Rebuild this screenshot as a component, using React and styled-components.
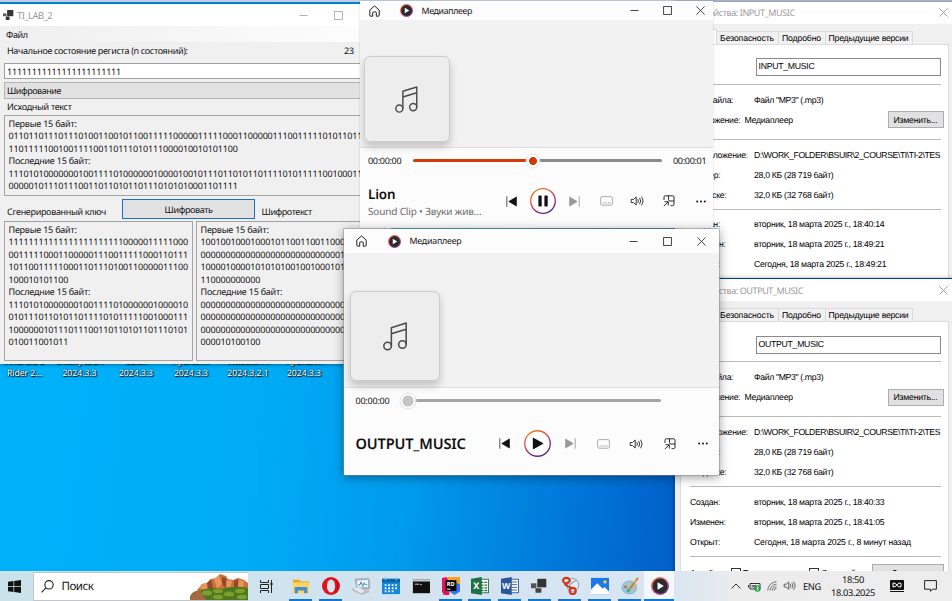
import React from 'react';
import styled, { createGlobalStyle, css } from 'styled-components';

const Global = createGlobalStyle`
  *, *::before, *::after { box-sizing: border-box; }
  html, body { margin: 0; padding: 0; overflow: hidden; }
  body { text-rendering: geometricPrecision; }
`;

const segoe = '"Noto Sans", "Open Sans", sans-serif';
const msSans = '"Liberation Sans", Arial, sans-serif';

const Desktop = styled.main`
  position: relative;
  width: 952px;
  height: 601px;
  overflow: hidden;
  font-family: ${segoe};
  color: #111;
  background:
    linear-gradient(180deg, #c3cde2 0 2px, transparent 2px),
    linear-gradient(97deg, #00b2fb 0%, #00acf6 30%, #009aec 46%, #007bdb 60%, #0062ca 71%, #005cc4 100%);
`;

const SkyStrip = styled.div`
  position: absolute;
  inset: 2px 0 auto 0;
  height: 3px;
  background: #0088d8;
`;

const T = styled.span`
  display: block;
  white-space: pre;
  font-size: ${p => p.$size || 9}px;
  letter-spacing: ${p => p.$ls || 0}px;
  color: ${p => p.$color || 'inherit'};
  font-weight: ${p => p.$weight || 400};
  ${p => p.$ml && css`margin-left: ${p.$ml}px;`}
`;

const Window = styled.section`
  position: absolute;
  left: ${p => p.$x}px;
  top: ${p => p.$y}px;
  width: ${p => p.$w}px;
  height: ${p => p.$h}px;
  display: flex;
  flex-direction: column;
  overflow: hidden;
  background: ${p => p.$bg || '#f0f0f0'};
  box-shadow: ${p => p.$shadow || '0 1px 3px rgba(0,0,0,.35)'};
`;

/* ---------- Window caption ---------- */
const Caption = styled.header`
  flex: none;
  display: flex;
  align-items: center;
  height: ${p => p.$h}px;
  padding-left: ${p => p.$pl || 0}px;
  background: ${p => p.$bg || '#fff'};
`;
const CaptionButtons = styled.div`
  display: flex;
  flex: none;
  margin-left: auto;
  margin-right: ${p => p.$mr || 0}px;
`;
const CaptionButton = styled.div`
  width: ${p => p.$w}px;
  display: grid;
  place-items: center;
`;
const Svg = styled.svg`
  display: block;
  flex: none;
  overflow: visible;
`;

function WinGlyph({ kind, color = '#222', s = 9 }) {
  return (
    <Svg width={s} height={s} viewBox="0 0 9 9" fill="none" stroke={color} strokeWidth="0.9">
      {kind === 'min' && <path d="M0.5 4.5H8.5" />}
      {kind === 'max' && <rect x="0.6" y="0.6" width="7.8" height="7.8" />}
      {kind === 'close' && <path d="M0.4 0.4L8.6 8.6M8.6 0.4L0.4 8.6" />}
    </Svg>
  );
}

function Buttons({ w, mr, color, kinds = ['min', 'max', 'close'] }) {
  return (
    <CaptionButtons $mr={mr}>
      {kinds.map(k => (
        <CaptionButton key={k} $w={w}><WinGlyph kind={k} color={color} /></CaptionButton>
      ))}
    </CaptionButtons>
  );
}

/* ---------- Cipher application ---------- */
const MenuBar = styled.nav`
  height: 16px;
  flex: none;
  display: flex;
  align-items: center;
  padding-left: 6px;
  background: linear-gradient(90deg, #f0f0f0 34px, #fdfdfd 370px);
`;
const FormRow = styled.div`
  flex: none;
  display: flex;
  align-items: center;
  height: ${p => p.$h}px;
  padding: 0 37px ${p => p.$pb || 0}px 7px;
  justify-content: space-between;
`;
const TextInput = styled.div`
  flex: none;
  height: 16px;
  margin: 3px 6px 3px 4px;
  padding-left: 2px;
  display: flex;
  align-items: center;
  background: #fff;
  border: 1px solid #a0a0a0;
`;
const ComboBox = styled.div`
  flex: none;
  height: 17px;
  margin: 0 6px 0 4px;
  padding-left: 2px;
  display: flex;
  align-items: center;
  background: #e1e1e1;
  border: 1px solid #b4b4b4;
`;
const Output = styled.div`
  flex: none;
  height: ${p => p.$h}px;
  width: ${p => p.$w}px;
  padding: 1.8px 0 0 3.5px;
  overflow: hidden;
  border: 1px solid #a3a3a3;
`;
const OutputLine = styled.div`
  height: 12.5px;
  line-height: 12.5px;
  white-space: pre;
  font-size: 9px;
  letter-spacing: ${p => (p.$digits ? '-0.165px' : '-0.22px')};
`;
const ActionRow = styled.div`
  flex: none;
  display: grid;
  grid-template-columns: 115px 133px 1fr;
  height: 25px;
  padding: 3px 0 2px 7px;
`;
const ActionLabel = styled.div`
  padding-top: ${p => p.$pt}px;
  padding-left: ${p => p.$pl || 0}px;
`;
const PrimaryButton = styled.div`
  display: grid;
  place-items: center;
  background: #e1e1e1;
  border: 1.5px solid #1c6fcb;
`;
const Boxes = styled.div`
  display: flex;
  gap: 3px;
  padding-left: 4px;
`;

const sourceLines = [
  'Первые 15 байт:',
  '01101101110111010011001011001111100000111110001100000111001111101011011101',
  '1101111100100111100110111010111000010010101100',
  'Последние 15 байт:',
  '11101010000000100111101000000100001001011101101011011110101111100100011100',
  '0000010111011100110110101101110101010001101111',
];
const keyLines = [
  'Первые 15 байт:',
  '111111111111111111111110000011111000',
  '001111100011000001110011111000110111',
  '101100111110001101110100110000011100',
  '100010101100',
  'Последние 15 байт:',
  '111010100000001001111010000001000010',
  '010111011010110111101011111001000111',
  '100000010111011100110110101101110101',
  '010011001011',
];
const cipherLines = [
  'Первые 15 байт:',
  '100100100010001011001100110001011010',
  '000000000000000000000000000010000000',
  '100001000010101010010010001011010110',
  '110000000000',
  'Последние 15 байт:',
  '000000000000000000000000000000000000',
  '000000000000000000000000000000000000',
  '000000000000000000000000000000000000',
  '000010100100',
];

function Lines({ items }) {
  return items.map((t, i) => <OutputLine key={i} $digits={/^[01]+$/.test(t)}>{t}</OutputLine>);
}

function FormsIcon({ s = 11 }) {
  return (
    <Svg width={s} height={s} viewBox="0 0 16 16">
      <rect x="6" y="0" width="9" height="9" fill="#333" />
      <rect x="0" y="5" width="5" height="4" fill="#555" />
      <rect x="4" y="9.5" width="5.5" height="5" fill="#333" />
    </Svg>
  );
}

function CipherWindow() {
  return (
    <Window $x={0} $y={4} $w={391} $h={359.5}>
      <Caption $h={22} $pl={3}>
        <FormsIcon />
        <T $size={9.6} $ls={-0.6} $color="#999" $ml={3}>TI_LAB_2</T>
        <Buttons w={35} color="#aaa" />
      </Caption>
      <MenuBar><T $ls={-0.4}>Файл</T></MenuBar>
      <FormRow $h={18} $pb={1}>
        <T $ls={-0.33}>Начальное состояние региста (n состояний):</T>
        <T $ls={-0.1}>23</T>
      </FormRow>
      <TextInput><T $ls={-0.19}>11111111111111111111111</T></TextInput>
      <ComboBox><T $ls={-0.45}>Шифрование</T></ComboBox>
      <FormRow $h={16} $pb={1}><T $ls={-0.31}>Исходный текст</T></FormRow>
      <Boxes><Output $w={381} $h={81}><Lines items={sourceLines} /></Output></Boxes>
      <ActionRow>
        <ActionLabel $pt={5.5}><T $ls={-0.31}>Сгенерированный ключ</T></ActionLabel>
        <PrimaryButton><T $ls={-0.38}>Шифровать</T></PrimaryButton>
        <ActionLabel $pt={5.5} $pl={6.5}><T $ls={-0.42}>Шифротекст</T></ActionLabel>
      </ActionRow>
      <Boxes>
        <Output $w={189} $h={140}><Lines items={keyLines} /></Output>
        <Output $w={189} $h={140}><Lines items={cipherLines} /></Output>
      </Boxes>
    </Window>
  );
}

/* ---------- File properties ---------- */
const TabStrip = styled.div`
  flex: none;
  height: 20px;
  display: flex;
  align-items: flex-end;
  padding-left: 7px;
  background: #f0f0f0;
`;
const Tab = styled.div`
  width: ${p => p.$w}px;
  height: ${p => (p.$active ? 15 : 13)}px;
  display: grid;
  place-items: center;
  background: ${p => (p.$active ? '#fff' : '#f1f1f1')};
  border: 1px solid #dadada;
  border-bottom: 0;
  border-left-width: ${p => (p.$active ? 1 : 0)}px;
`;
const Page = styled.div`
  flex: 1;
  margin: 0 0 0 5px;
  width: 269px;
  padding: 0 7px 0 9px;
  background: #fff;
  border: 1px solid #dcdcdc;
`;
const Group = styled.div`
  width: 251px;
  height: ${p => p.$h}px;
  padding-top: ${p => p.$pt}px;
  border-bottom: 1px solid #b9b9b9;
`;
const PropRow = styled.div`
  display: flex;
  align-items: center;
  height: 20px;
  padding-left: 0.5px;
`;
const PropLabel = styled.div`
  flex: none;
  width: ${p => p.$w || 64}px;
`;
const PropValue = styled.div`
  width: 190px;
  overflow: hidden;
`;
const NameField = styled.div`
  height: 18px;
  margin-left: 66px;
  width: 185px;
  padding: 2px 0 0 2px;
  border: 1px solid #8a8a8a;
`;
const GreyButton = styled.div`
  flex: none;
  width: ${p => p.$w}px;
  height: 17px;
  margin-left: auto;
  margin-right: ${p => p.$mr || 0}px;
  display: grid;
  place-items: center;
  background: #e1e1e1;
  border: 1px solid #adadad;
`;
const Check = styled.span`
  flex: none;
  width: 10px;
  height: 10px;
  margin-left: ${p => p.$ml || 0}px;
  margin-right: 2px;
  border: 1px solid #333;
  background: #fff;
`;
const Sans = styled(T)`
  font-family: ${msSans};
  font-size: 8.7px;
  letter-spacing: ${p => p.$ls ?? -0.27}px;
  color: #000;
`;

function Prop({ label, value, ls }) {
  return (
    <PropRow>
      <PropLabel><Sans>{label}</Sans></PropLabel>
      <PropValue><Sans $ls={ls}>{value}</Sans></PropValue>
    </PropRow>
  );
}

function PropertiesWindow({ y, h, name, created, changed, opened, openedLs }) {
  return (
    <Window $x={674.5} $y={y} $w={290} $h={h} $shadow="0 0 5px rgba(0,0,0,.45)">
      <Caption $h={22} $pl={24}>
        <T $size={9} $ls={-0.4} $color="#9a9a9a">Свойства: {name}</T>
        <Buttons w={30} mr={6} color="#999" kinds={['close']} />
      </Caption>
      <TabStrip>
        <Tab $w={35} $active><Sans>Общие</Sans></Tab>
        <Tab $w={62}><Sans $ls={-0.13}>Безопасность</Sans></Tab>
        <Tab $w={47}><Sans $ls={-0.15}>Подробно</Sans></Tab>
        <Tab $w={87}><Sans $ls={-0.24}>Предыдущие версии</Sans></Tab>
      </TabStrip>
      <Page>
        <Group $h={40} $pt={13.5}><NameField><Sans>{name}</Sans></NameField></Group>
        <Group $h={55} $pt={5}>
          <Prop label="Тип файла:" value={'Файл "MP3" (.mp3)'} ls={-0.36} />
          <PropRow>
            <PropLabel $w={54.5}><Sans>Приложение:</Sans></PropLabel>
            <Sans>Медиаплеер</Sans>
            <GreyButton $w={56} $mr={-3}><Sans $ls={-0.22}>Изменить...</Sans></GreyButton>
          </PropRow>
        </Group>
        <Group $h={70} $pt={5}>
          <Prop label="Расположение:" value="D:\WORK_FOLDER\BSUIR\2_COURSE\TI\TI-2\TES" ls={-0.43} />
          <Prop label="Размер:" value="28,0 КБ (28 719 байт)" ls={-0.3} />
          <Prop label="На диске:" value="32,0 КБ (32 768 байт)" ls={-0.3} />
        </Group>
        <Group $h={70} $pt={4.5}>
          <Prop label="Создан:" value={created} />
          <Prop label="Изменен:" value={changed} />
          <Prop label="Открыт:" value={opened} ls={openedLs} />
        </Group>
        <Group $h={40} $pt={5.5}>
          <PropRow>
            <PropLabel $w={41}><Sans>Атрибуты:</Sans></PropLabel>
            <Check /><Sans>Только чтение</Sans>
            <Check $ml={12} /><Sans>Скрытый</Sans>
            <GreyButton $w={72} $mr={-3}><Sans>Другие...</Sans></GreyButton>
          </PropRow>
        </Group>
      </Page>
    </Window>
  );
}

/* ---------- Media player ---------- */
const PlayerBody = styled.div`
  flex: none;
  height: ${p => p.$h}px;
  padding: ${p => p.$pad};
  background: #f2f2f2;
  border-bottom: 1px solid #dedede;
`;
const AlbumArt = styled.div`
  display: grid;
  place-items: center;
  width: ${p => p.$w}px;
  height: ${p => p.$h}px;
  border-radius: 6px;
  background: #ededed;
  border: 1px solid #cdcdcd;
  box-shadow: 0 5px 9px rgba(0,0,0,.2);
`;
const SeekRow = styled.div`
  flex: none;
  height: 25px;
  display: flex;
  align-items: center;
  padding-left: ${p => p.$pl}px;
`;
const SeekTime = styled.div`
  flex: none;
  width: ${p => p.$w}px;
`;
const Track = styled.div`
  position: relative;
  flex: none;
  width: ${p => p.$w}px;
  height: 3px;
  border-radius: 2px;
  background: ${p => `linear-gradient(90deg, #d43a09 ${p.$fill}%, ${p.$rest} ${p.$fill}%)`};
`;
const Thumb = styled.div`
  position: absolute;
  left: ${p => p.$at}%;
  top: 50%;
  width: ${p => p.$d}px;
  height: ${p => p.$d}px;
  transform: translate(-50%, -50%);
  border-radius: 50%;
  border: 1px solid #e2e2e2;
  background: radial-gradient(circle, ${p => p.$color} ${p => p.$r}px, #fff ${p => p.$r + 0.7}px);
`;
const ControlRow = styled.div`
  flex: none;
  height: ${p => p.$h}px;
  display: flex;
  align-items: center;
`;
const TrackInfo = styled.div`
  flex: none;
  width: ${p => p.$w}px;
  padding-left: ${p => p.$pl}px;
  white-space: nowrap;
`;
const SubTitle = styled(T)`
  margin-top: 1px;
`;
const Control = styled.div`
  flex: none;
  width: ${p => p.$w}px;
  display: grid;
  place-items: center;
`;
const TitleIcon = styled.div`
  flex: none;
  margin-left: ${p => p.$ml}px;
`;

function HomeIcon() {
  return (
    <Svg width="11" height="12" viewBox="0 0 11 12" fill="none" stroke="#222" strokeWidth="1">
      <path d="M.8 5.1 5.5.9l4.700 4.200v5.300q0 .8-.8.8H7.300V7.700q0-.8-.8-.8h-2q-.8 0-.8.8v3.500H1.600q-.8 0-.8-.8z" strokeLinejoin="round" />
    </Svg>
  );
}
function PlayerLogo({ s = 13, id }) {
  return (
    <Svg width={s} height={s} viewBox="0 0 26 26">
      <defs>
        <linearGradient id={id} x1="0" y1="0" x2="1" y2="1">
          <stop offset="0" stopColor="#f58220" /><stop offset=".55" stopColor="#d1508a" /><stop offset="1" stopColor="#4b2a8e" />
        </linearGradient>
      </defs>
      <circle cx="13" cy="13" r="13" fill={`url(#${id})`} />
      <circle cx="13" cy="13" r="10.800" fill="#2b2a2e" />
      <path d="M9.500 7.500v11l9-5.500z" fill="#fff" />
    </Svg>
  );
}
function NoteIcon({ s }) {
  return (
    <Svg width={s} height={s * 1.17} viewBox="0 0 24 28" fill="none" stroke="#4b4b4b" strokeWidth="1.500">
      <circle cx="4.500" cy="23.500" r="3.700" /><circle cx="19" cy="22" r="3.700" />
      <path d="M8.200 23.500V5.500L22.700 1v21M8.200 11.500 22.700 7" strokeLinejoin="round" />
    </Svg>
  );
}
function Ring({ d, playing, id }) {
  return (
    <Svg width={d} height={d} viewBox="0 0 26 26">
      <defs>
        <linearGradient id={id} x1=".2" y1="0" x2=".8" y2="1">
          <stop offset="0" stopColor="#f0801f" /><stop offset=".35" stopColor="#e0503c" /><stop offset=".6" stopColor="#a5288a" /><stop offset="1" stopColor="#4a2382" />
        </linearGradient>
      </defs>
      <circle cx="13" cy="13" r="12.300" fill="#fff" stroke={`url(#${id})`} strokeWidth="1.300" />
      {playing
        ? <path d="M9.100 7.500h1.900q.7 0 .7.700v9.600q0 .7-.7.700H9.100q-.7 0-.7-.7V8.200q0-.7.700-.7zM15.100 7.500h1.900q.7 0 .7.700v9.600q0 .7-.7.700h-1.900q-.7 0-.7-.7V8.200q0-.7.700-.7z" fill="#111" />
        : <path d="M8.500 8.200q0-1 1-.5l8.600 4.700q1 .6 0 1.200l-8.600 4.700q-1 .5-1-.5z" fill="#111" />}
    </Svg>
  );
}
function PrevIcon() {
  return (
    <Svg width="11" height="11" viewBox="0 0 11 11">
      <path d="M.3.300h1v10.400h-1z" fill="#555" />
      <path d="M10.800 1v9q0 .6-.6.200L3 6q-.7-.5 0-1L10.200.700q.6-.3.600.3z" fill="#111" />
    </Svg>
  );
}
function NextIcon() {
  return (
    <Svg width="11" height="11" viewBox="0 0 11 11">
      <path d="M9.700.300h1v10.400h-1z" fill="#a5a5a5" />
      <path d="M.2 1v9q0 .6.600.2L8 6q.7-.5 0-1L.8.700Q.2.400.2 1z" fill="#999" />
    </Svg>
  );
}
function CaptionIcon() {
  return (
    <Svg width="13" height="10" viewBox="0 0 13 10" fill="none" stroke="#a4a4a4">
      <rect x=".6" y=".6" width="11.800" height="8.600" rx="1.500" strokeWidth=".9" />
      <path d="M2.500 7h2M5.300 7h1.500M7.800 7h2.700" strokeWidth=".9" />
    </Svg>
  );
}
function SoundIcon({ color = '#222', s = 13 }) {
  return (
    <Svg width={s} height={s * 0.77} viewBox="0 0 13 10" fill="none" stroke={color} strokeWidth=".9" strokeLinecap="round">
      <path d="M.6 3.500h1.800L5.200 1v8L2.400 6.500H.6z" strokeLinejoin="round" />
      <path d="M7 3.500q1 1.500 0 3M8.800 2.200q2 2.800 0 5.600M10.600 1q3 4 0 8" />
    </Svg>
  );
}
function CastIcon() {
  return (
    <Svg width="12" height="12" viewBox="0 0 12 12" fill="none" stroke="#222" strokeWidth=".95">
      <path d="M1 5V2.200Q1 .8 2.400.800h7.200Q11 .8 11 2.200v7Q11 10.600 9.600 10.600H7.500" />
      <path d="M5.500.8v3.700q0 1.500 1.500 1.500H11" />
      <path d="M.8 11.200 5 7M1.500 6.700h3.800v3.800" />
    </Svg>
  );
}
function DotsIcon() {
  return (
    <Svg width="10" height="3" viewBox="0 0 10 3" fill="#111">
      <circle cx="1.200" cy="1.500" r="1" /><circle cx="5" cy="1.500" r="1" /><circle cx="8.800" cy="1.500" r="1" />
    </Svg>
  );
}

function PlayerWindow({ c }) {
  return (
    <Window $x={c.x} $y={c.y} $w={c.w} $h={c.h} $bg="#fcfcfc" $shadow={c.shadow}>
      <Caption $h={c.capH} $pl={c.capPad} $bg="#fcfcfc">
        <HomeIcon />
        <TitleIcon $ml={c.logoGap}><PlayerLogo id={`logo-${c.id}`} /></TitleIcon>
        <T $size={8.8} $ls={c.capLs} $ml={8.500}>Медиаплеер</T>
        <Buttons w={c.btnW} mr={c.btnMr} color="#333" />
      </Caption>
      <PlayerBody $h={c.bodyH} $pad={c.bodyPad}>
        <AlbumArt $w={c.artW} $h={c.artH}><NoteIcon s={c.note} /></AlbumArt>
      </PlayerBody>
      <SeekRow $pl={c.seekPad}>
        <SeekTime $w={c.seekTimeW}><T $size={9} $ls={c.timeLs}>00:00:00</T></SeekTime>
        <Track $w={c.trackW} $fill={c.fill} $rest={c.rest}>
          <Thumb $at={c.fill} $d={c.thumbD} $r={c.thumbR} $color={c.thumbColor} />
        </Track>
        {c.end && <T $size={9} $ls={c.timeLs} $ml={11}>{c.end}</T>}
      </SeekRow>
      <ControlRow $h={c.ctrlH}>
        <TrackInfo $w={c.infoW} $pl={c.seekPad}>
          <T $size={c.titleSize} $ls={c.titleLs} $weight={600}>{c.title}</T>
          {c.sub && <SubTitle $size={10} $ls={-0.16} $color="#6a6a6a">{c.sub}</SubTitle>}
        </TrackInfo>
        <Control $w={c.cell}><PrevIcon /></Control>
        <Control $w={c.cell}><Ring d={c.ring} playing={c.playing} id={`ring-${c.id}`} /></Control>
        <Control $w={c.cell}><NextIcon /></Control>
        <Control $w={c.cell}><CaptionIcon /></Control>
        <Control $w={c.cell}><SoundIcon /></Control>
        <Control $w={c.cell}><CastIcon /></Control>
        <Control $w={c.cell}><DotsIcon /></Control>
      </ControlRow>
    </Window>
  );
}

const lion = {
  id: 'lion', x: 360, y: 1, w: 353, h: 227, shadow: '0 0 2px rgba(0,0,0,.18)',
  capH: 19, capPad: 9, logoGap: 20, capLs: -0.35, btnW: 33, btnMr: -3.5,
  bodyH: 128, bodyPad: '36px 0 0 3.5px', artW: 86, artH: 86, note: 23,
  seekPad: 8, seekTimeW: 45, timeLs: -0.3, trackW: 249, fill: 48.200, rest: '#8b8b8b',
  thumbD: 15, thumbR: 3.600, thumbColor: '#d43a09', end: '00:00:01',
  ctrlH: 56, infoW: 135.700, titleSize: 13.4, titleLs: -0.15, title: 'Lion', sub: 'Sound Clip • Звуки жив…',
  cell: 31.600, ring: 26, playing: true,
};
const output = {
  id: 'output', x: 344, y: 229, w: 375, h: 246, shadow: '0 0 0 .5px #8a8a8a, 0 2px 10px rgba(0,0,0,.42)',
  capH: 24, capPad: 12, logoGap: 21, capLs: -0.2, btnW: 34, btnMr: 1,
  bodyH: 135, bodyPad: '38px 0 0 6px', artW: 90, artH: 90, note: 24.500,
  seekPad: 11.5, seekTimeW: 52.5, timeLs: -0.22, trackW: 253, fill: 0, rest: '#a5a5a5',
  thumbD: 17, thumbR: 5.200, thumbColor: '#c5c5c5',
  ctrlH: 61, infoW: 144, titleSize: 14.6, titleLs: -0.18, title: 'OUTPUT_MUSIC',
  cell: 33, ring: 27, playing: false,
};

/* ---------- Desktop labels ---------- */
const Labels = styled.div`
  position: absolute;
  left: 0;
  top: 356px;
  display: flex;
`;
const DesktopLabel = styled.div`
  width: ${p => p.$w}px;
  text-align: center;
  white-space: nowrap;
  color: #fff;
  font-size: 8.7px;
  line-height: 11.5px;
  letter-spacing: -0.05px;
  text-shadow: 0 0 2px #000, 1px 1px 1px #000;
`;

/* ---------- Taskbar ---------- */
const Taskbar = styled.footer`
  position: absolute;
  left: 0;
  top: 571px;
  width: 952px;
  height: 30px;
  display: flex;
  align-items: stretch;
  background: linear-gradient(90deg, #cbe2ea 0, #cfe4ee 300px, #d5e3f0 500px, #d9e5f2 640px, #dbe6f1 680px, #ececec 740px, #ededed 100%);
`;
const StartButton = styled.div`
  width: 32.5px;
  flex: none;
  display: flex;
  align-items: center;
  padding-left: 8px;
`;
const SearchBox = styled.div`
  flex: none;
  width: 215.5px;
  margin-top: 1px;
  display: flex;
  align-items: center;
  padding-left: 7.5px;
  background: #fff;
  border: 1px solid #c0c6ca;
  border-right-width: 0;
  overflow: hidden;
`;
const SearchArt = styled.div`
  margin-left: auto;
  align-self: flex-end;
`;
const TaskView = styled.div`
  flex: none;
  width: 38px;
  padding-right: 2px;
  display: grid;
  place-items: center;
`;
const TaskItem = styled.div`
  flex: none;
  width: 29.85px;
  display: flex;
  flex-direction: column;
  align-items: center;
  background: ${p => (p.$active ? 'rgba(255,255,255,.7)' : 'transparent')};
`;
const TaskIcon = styled.div`
  height: 28px;
  display: grid;
  place-items: center;
  padding: 2px 0 0 1px;
`;
const Underline = styled.div`
  height: 2px;
  width: ${p => (p.$active ? '100%' : '23px')};
  background: #0f78d6;
`;
const Tray = styled.div`
  margin-left: auto;
  display: grid;
  grid-template-columns: 18px 19px 17.5px 18px 26px 56px 32px 35px 4px;
  align-items: center;
  justify-items: center;
`;
const Clock = styled.div`
  display: flex;
  flex-direction: column;
  align-items: center;
  line-height: 13.500px;
`;

const appIcons = [
  { id: 'explorer', open: true, art: <>
    <path d="M1 3h7l2 2h9v4H1z" fill="#e8a820" /><path d="M1 6h18v12H1z" fill="#ffd45c" />
    <path d="M3 11h14v7h-3.500v-3h-7v3H3z" fill="#3f8fd6" /></> },
  { id: 'opera', open: true, art: <>
    <ellipse cx="10" cy="10" rx="10" ry="10" fill="#e2121f" /><ellipse cx="10" cy="10" rx="4.500" ry="7.300" fill="#d6e6ef" />
    <path d="M14 2.200a10 10 0 0 1 0 15.600q3-3 3-7.800t-3-7.800z" fill="#a70012" /></> },
  { id: 'monitor', art: <>
    <path d="M3 2l15-1 2 2v10l-3 1-12-1z" fill="#a3adb7" /><path d="M5.500 4 18 3v8.500l-12-.5z" fill="#e9f5fc" />
    <path d="M7 8.500h2l1-3 2 5 1.500-4 1 2h2.500" fill="none" stroke="#3583c0" /><path d="M0 13l8-3 8 5 3-1v3l-8 3-11-5z" fill="#b9bfc4" />
    <path d="M1 13l7-2 6 5-4 2z" fill="#e4e7ea" /></> },
  { id: 'calendar', art: <>
    <rect x="0" y="2" width="20" height="17" fill="#1588d9" /><rect x="0" y="2" width="20" height="4" fill="#0c66ad" />
    <path d="M3 9h14M3 12.500h14M3 16h10" stroke="#fff" strokeWidth="2" strokeDasharray="2 1.900" /><path d="M4 .5v3M16 .5v3" stroke="#6dc1f5" strokeWidth="1.500" /></> },
  { id: 'console', art: <>
    <rect x="1" y="2.500" width="19" height="15.500" fill="#111" /><rect x="1" y="2.500" width="19" height="2.500" fill="#c9c9c9" />
    <path d="M3 8h5M9 8.500h2" stroke="#ddd" /></> },
  { id: 'rider', open: true, art: <>
    <path d="M6 0h14v12l-8 3z" fill="#f7a21b" /><path d="M14 6l6 2v8l-6 4-6-4z" fill="#3574f0" /><path d="M0 1l5-1 4 6-1 14H2l-2-4z" fill="#e5125d" />
    <rect x="4" y="3.500" width="12" height="12" fill="#000" />
    <path d="M5.500 13.500h4" stroke="#fff" strokeWidth="1.100" /><text x="5.300" y="9.800" fontSize="6.300" fontWeight="700" fill="#fff">RD</text></> },
  { id: 'excel', open: true, art: <>
    <rect x="9" y="2.500" width="10.500" height="15" fill="#fff" stroke="#1e7145" /><path d="M11 6h7M11 9h7M11 12h7M11 15h7" stroke="#1e7145" strokeWidth="1.500" strokeDasharray="3 1" />
    <path d="M0 2 12 0v20L0 18z" fill="#1e7145" /><text x="2.400" y="13.800" fontSize="10" fontWeight="700" fill="#fff">X</text></> },
  { id: 'word', open: true, art: <>
    <rect x="9" y="2.500" width="10.500" height="15" fill="#fff" stroke="#2b579a" /><path d="M12 5.500h6M12 8.500h6M12 11.500h6M12 14.500h6" stroke="#2b579a" />
    <path d="M0 2 12 0v20L0 18z" fill="#2b579a" /><text x="1" y="13.600" fontSize="9.500" fontWeight="700" fill="#fff">W</text></> },
  { id: 'forms', open: true, art: <>
    <rect x="7" y="2" width="10" height="9.500" fill="#333" /><rect x="0" y="7" width="6" height="5.500" fill="#555" /><rect x="5" y="12.500" width="6.500" height="5" fill="#444" /></> },
  { id: 'snip', open: true, art: <>
    <ellipse cx="13" cy="9" rx="6.500" ry="7.500" fill="#e4edf5" stroke="#7f97b5" />
    <path d="M4 8 13 13" stroke="#c8321a" strokeWidth="2.400" />
    <path d="M8 10 17 3" stroke="#9aa" strokeWidth="1.600" />
    <ellipse cx="6" cy="4" rx="3.800" ry="3" fill="none" stroke="#d23a1e" strokeWidth="2.400" />
    <ellipse cx="13" cy="15.500" rx="3.300" ry="3.400" fill="none" stroke="#d23a1e" strokeWidth="2.400" /></> },
  { id: 'photos', open: true, art: <>
    <rect x="0" y="1" width="20" height="18" fill="#1d78e8" /><path d="M0 19V14l7-7 6 6 2-2 5 5v3z" fill="#fff" /><circle cx="15.500" cy="5.500" r="1.800" fill="#ffd23b" /></> },
  { id: 'paint', open: true, art: <>
    <path d="M1 12C1 6 8 3 13 5s6 8 2 12-14 1-14-5z" fill="#8cc8e8" stroke="#6da4c0" strokeWidth=".6" />
    <circle cx="5" cy="11" r="1.500" fill="#e0592b" /><circle cx="8" cy="8" r="1.500" fill="#f2c531" /><circle cx="8" cy="15" r="1.700" fill="#4aa34d" />
    <path d="M19 1 9 14" stroke="#c98334" strokeWidth="2.300" /><path d="M16 2v14" stroke="#e7b26a" strokeWidth="1.700" /></> },
];

function SearchScene() {
  return (
    <Svg width="58" height="27" viewBox="0 0 58 27">
      <path d="M5 20 12 11l5-1 4-4 5-1 4-4 6 2 2 3 5 1 5-2 6 2 4 3v12z" fill="#c9703a" />
      <path d="M9 15l4-4 4-1v7zM24 6l5-4 3 9-5 5zM37 7l5 1-2 8-4-3zM49 7l5 1-1 9-5-2z" fill="#e8965a" />
      <path d="M17 10l4-4 2 9-4 3zM32 4l4 1v10l-4-4zM44 8l4-2v10l-4-2z" fill="#92492c" />
      <path d="M0 26q0-8 9-8 12-5 22-2 14-4 27-1v12H0z" fill="#4c7a20" />
      <path d="M0 26q1-7 10-9l6 10H0z" fill="#a56a3f" />
      <g fill="#7f9f2c">
        <ellipse cx="17" cy="20" rx="5" ry="2.500" /><ellipse cx="28" cy="18" rx="5" ry="2" /><ellipse cx="39" cy="21" rx="5" ry="2.500" />
        <ellipse cx="50" cy="18" rx="5" ry="2.200" /><ellipse cx="28" cy="24" rx="5" ry="2.200" /><ellipse cx="52" cy="24" rx="5" ry="2.200" />
      </g>
    </Svg>
  );
}

export default function App() {
  return (
    <Desktop>
      <Global />
      <SkyStrip />
      <Labels>
        <DesktopLabel $w={49}>Android S<br />Rider 2…</DesktopLabel>
        <DesktopLabel $w={61}>IntelliJ IDEA<br />2024.3.3</DesktopLabel>
        <DesktopLabel $w={52}>CLion<br />2024.3.3</DesktopLabel>
        <DesktopLabel $w={58}>PyCharm<br />2024.3.3</DesktopLabel>
        <DesktopLabel $w={56}>WebStorm<br />2024.3.2.1</DesktopLabel>
        <DesktopLabel $w={56}>PyCharm<br />2024.3.3</DesktopLabel>
      </Labels>
      <CipherWindow />
      <PropertiesWindow
        y={1.5} h={276} name="INPUT_MUSIC"
        created="вторник, 18 марта 2025 г., 18:40:14"
        changed="вторник, 18 марта 2025 г., 18:49:21"
        opened="Сегодня, 18 марта 2025 г., 18:49:21"
      />
      <PropertiesWindow
        y={279} h={340} name="OUTPUT_MUSIC"
        created="вторник, 18 марта 2025 г., 18:40:33"
        changed="вторник, 18 марта 2025 г., 18:41:05"
        opened="Сегодня, 18 марта 2025 г., 8 минут назад"
        openedLs={-0.2}
      />
      <PlayerWindow c={lion} />
      <PlayerWindow c={output} />
      <Taskbar>
        <StartButton>
          <Svg width="13" height="13" viewBox="0 0 13 13" fill="#111">
            <path d="M0 1.800 5.500 1v5.200H0zM6.200.900 13 0v6.200H6.200zM0 6.900h5.500V12L0 11.300zM6.200 6.900H13V13l-6.800-.9z" />
          </Svg>
        </StartButton>
        <SearchBox>
          <Svg width="13" height="13" viewBox="0 0 13 13" fill="none" stroke="#222" strokeWidth="1.100">
            <circle cx="8" cy="4.800" r="4.200" /><path d="M5 7.800.500 12.300" />
          </Svg>
          <T $size={11.5} $ls={-0.45} $ml={7.500}>Поиск</T>
          <SearchArt><SearchScene /></SearchArt>
        </SearchBox>
        <TaskView>
          <Svg width="13" height="13" viewBox="0 0 13 13" fill="none" stroke="#222" strokeWidth="1">
            <path d="M.5 0v2.500h8V0M.5 13v-2.500h8V13M.5 4.500h8v4h-8zM11.500 0v13" /><path d="M10.300 4h2.400" strokeWidth="1.600" />
          </Svg>
        </TaskView>
        {appIcons.map(a => (
          <TaskItem key={a.id}>
            <TaskIcon><Svg width="18" height="18" viewBox="0 0 20 20">{a.art}</Svg></TaskIcon>
            {a.open && <Underline />}
          </TaskItem>
        ))}
        <TaskItem $active>
          <TaskIcon><PlayerLogo s={18} id="logo-bar" /></TaskIcon>
          <Underline $active />
        </TaskItem>
        <Tray>
          <Svg width="10" height="6" viewBox="0 0 10 6" fill="none" stroke="#333"><path d="M.5 5.500 5 1l4.500 4.500" /></Svg>
          <Svg width="13" height="11" viewBox="0 0 13 11" fill="none" stroke="#333">
            <path d="M2 2.500h10v5.500H2zM.5 4v2.500" /><path d="M3.500 4h5v2.500h-5z" fill="#777" stroke="none" />
            <circle cx="9.500" cy="7.500" r="3.200" fill="#2b9a48" stroke="none" /><path d="M8.500 6.500l2 2-1 1V5.500l1 1-2 2" stroke="#fff" strokeWidth=".6" />
          </Svg>
          <Svg width="10" height="10" viewBox="0 0 11 11" fill="none" stroke="#555" strokeWidth=".9">
            <path d="M.8 10.500A10 10 0 0 1 10.500.800M3.300 10.500a7.500 7.500 0 0 1 7.200-7M5.600 10.500a5 5 0 0 1 4.900-4.500M7.800 10.500a2.500 2.500 0 0 1 2.700-2.200" />
          </Svg>
          <SoundIcon color="#444" s={12} />
          <T $size={9.300} $ls={-0.4}>ENG</T>
          <Clock><T $size={9.300} $ls={-0.35}>18:50</T><T $size={9.300} $ls={-0.35}>18.03.2025</T></Clock>
          <Svg width="14" height="12" viewBox="0 0 14 12">
            <rect width="14" height="10" rx=".8" fill="#111" /><path d="M0 11.500h14" stroke="#111" />
            <path d="M3 3v4l2-.3 4-3.700 2 .3v3.500l-2 .2-4-3.700z" fill="none" stroke="#fff" strokeWidth="1" />
          </Svg>
          <Svg width="13" height="12" viewBox="0 0 13 12" fill="none" stroke="#222"><path d="M.6.600h11.800v8.600H8.500L6.500 11.300V9.200H.6z" /></Svg>
          <span />
        </Tray>
      </Taskbar>
    </Desktop>
  );
}
